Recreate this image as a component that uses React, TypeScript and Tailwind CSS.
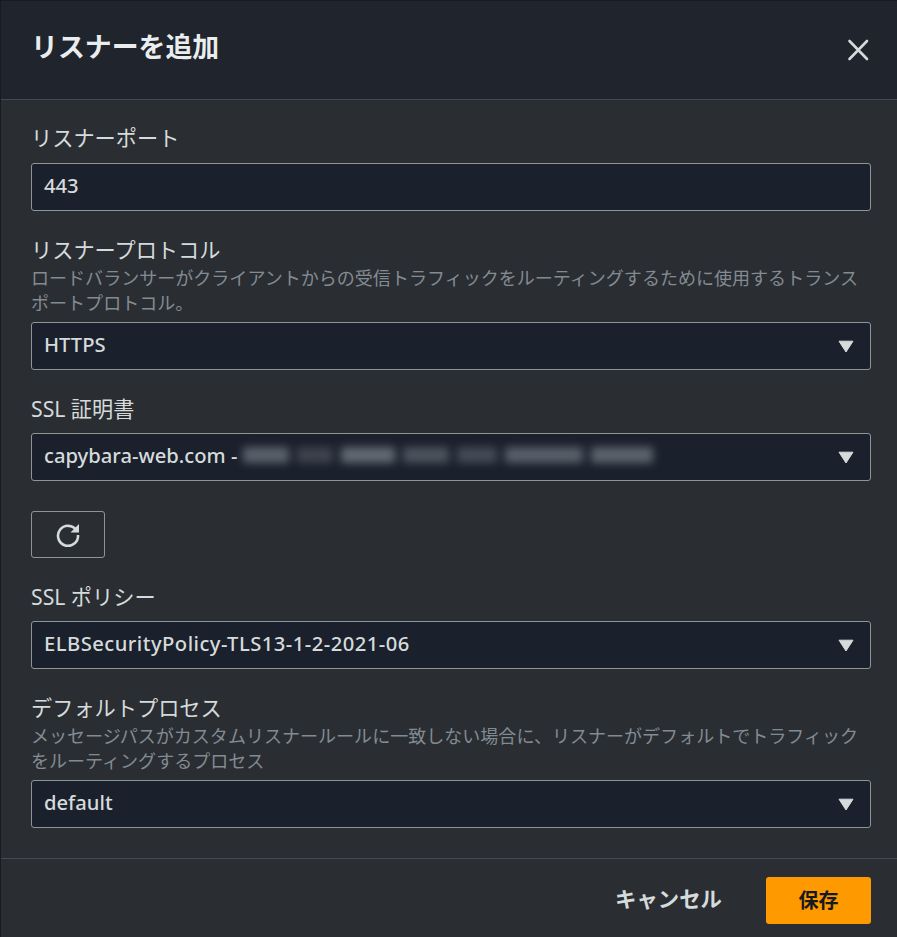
import React from "react";

const font = { fontFamily: '"Noto Sans", "Noto Sans CJK JP", sans-serif' };

function Caret() {
  return (
    <svg width="16" height="13" viewBox="0 0 16 13" className="shrink-0">
      <path d="M1 1.2 H15 L8 12 Z" fill="#d5dbdb" stroke="#d5dbdb" strokeWidth="1" strokeLinejoin="round" />
    </svg>
  );
}

function Field({ children, select }: { children: React.ReactNode; select?: boolean }) {
  return (
    <div className="flex h-[48px] items-center justify-between rounded-[3px] border border-[#8d9596] bg-[#1a202c] pl-[12px] pr-[16px] text-[20.2px] font-medium text-[#d5dbdb]">
      <div className="flex items-center pb-[3px]">{children}</div>
      {select && <Caret />}
    </div>
  );
}

const redactions = [
  { w: "w-[46px]", c: "bg-[#5a616b]" },
  { w: "w-[36px]", c: "bg-[#3d434d]" },
  { w: "w-[54px]", c: "bg-[#626972]" },
  { w: "w-[46px]", c: "bg-[#4c535d]" },
  { w: "w-[40px]", c: "bg-[#444b55]" },
  { w: "w-[78px]", c: "bg-[#585f69]" },
  { w: "w-[62px]", c: "bg-[#5c636d]" },
];

export default function App() {
  return (
    <div className="flex h-[937px] w-[897px] flex-col overflow-hidden border-l border-t border-[#171b22] bg-[#2a2e33]" style={font}>
      <header className="flex h-[99px] shrink-0 items-start justify-between border-b border-[#454a50] bg-[#1f242d] pl-[30px] pr-[27px]">
        <h1 className="mt-[26px] text-[26.9px] font-bold leading-[40px] text-[#eaeded]">リスナーを追加</h1>
        <svg width="24" height="24" viewBox="0 0 24 24" className="mt-[37px]" fill="none" stroke="#d5dbdb" strokeWidth="2.6" strokeLinecap="round">
          <path d="M3.5 3 L21 21 M21 3 L3.5 21" />
        </svg>
      </header>

      <main className="flex flex-1 flex-col pl-[30px] pr-[26px]">
        <label className="mt-[22px] text-[21.2px] leading-[32px] text-[#d5dbdb]">リスナーポート</label>
        <div className="mt-[9px]"><Field>443</Field></div>

        <label className="mt-[23px] text-[21.2px] leading-[32px] text-[#d5dbdb]">リスナープロトコル</label>
        <p className="text-[18.05px] leading-[25px] text-[#838b92]">
          ロードバランサーがクライアントからの受信トラフィックをルーティングするために使用するトランスポートプロトコル。
        </p>
        <div className="mt-[6px]"><Field select>HTTPS</Field></div>

        <label className="mt-[23px] text-[21.2px] leading-[32px] text-[#d5dbdb]">SSL 証明書</label>
        <div className="mt-[8px]">
          <Field select>
            <span>capybara-web.com -&nbsp;</span>
            <span className="flex gap-[8px] blur-[4px]">
              {redactions.map((r, i) => (
                <span key={i} className={`h-[16px] ${r.w} ${r.c}`} />
              ))}
            </span>
          </Field>
        </div>
        <button className="mt-[30px] flex h-[47px] w-[74px] items-center justify-center rounded-[3px] border border-[#8d9596] bg-transparent">
          <svg width="26" height="26" viewBox="0 0 26 26" fill="none" className="-mt-[2px]">
            <path d="M21.5 9.5 A10 10 0 1 0 23 14" stroke="#d5dbdb" strokeWidth="2.6" />
            <path d="M24 3 V11.5 H15.5 Z" fill="#d5dbdb" />
          </svg>
        </button>

        <label className="mt-[23px] text-[21.2px] leading-[32px] text-[#d5dbdb]">SSL ポリシー</label>
        <div className="mt-[8px]"><Field select><span className="tracking-[0.47px]">ELBSecurityPolicy-TLS13-1-2-2021-06</span></Field></div>

        <label className="mt-[23px] text-[21.2px] leading-[32px] text-[#d5dbdb]">デフォルトプロセス</label>
        <p className="text-[18.05px] leading-[25px] text-[#838b92]">
          メッセージパスがカスタムリスナールールに一致しない場合に、リスナーがデフォルトでトラフィックをルーティングするプロセス
        </p>
        <div className="mt-[6px]"><Field select>default</Field></div>
      </main>

      <footer className="flex h-[79px] shrink-0 items-start justify-end gap-[44px] border-t border-[#454a50] pr-[26px] pt-[18px]">
        <span className="text-[21.4px] font-bold leading-[44px] text-[#d5dbdb]">キャンセル</span>
        <button className="h-[47px] w-[105px] rounded-[3px] bg-[#ff9900] text-[20px] font-bold text-[#16191f]">保存</button>
      </footer>
    </div>
  );
}
